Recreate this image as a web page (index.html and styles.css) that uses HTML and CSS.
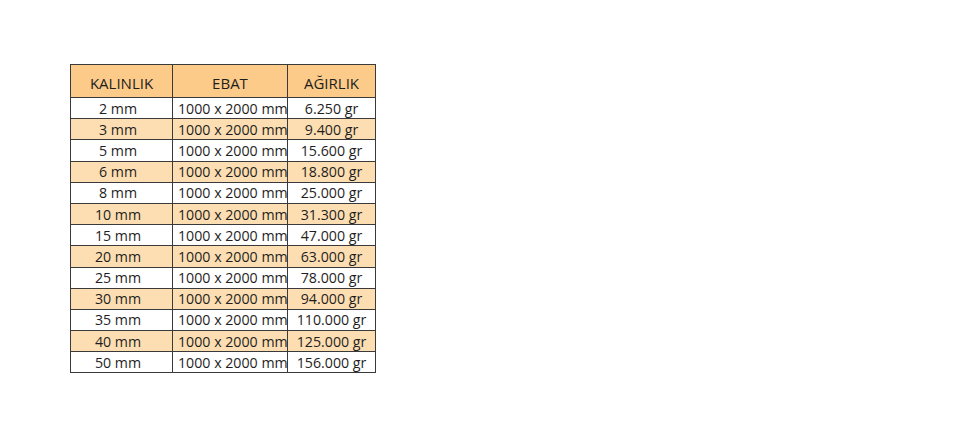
FILE: index.html
```html
<!DOCTYPE html>
<html lang="tr">
<head>
<meta charset="utf-8">
<title>Ağırlık Tablosu</title>
<link rel="stylesheet" href="styles.css">
</head>
<body>
<table class="spec">
  <colgroup>
    <col class="c1"><col class="c2"><col class="c3">
  </colgroup>
  <thead>
    <tr><th>KALINLIK</th><th>EBAT</th><th>AĞIRLIK</th></tr>
  </thead>
  <tbody>
    <tr><td class="thk">2 mm</td><td class="size">1000 x 2000 mm</td><td class="wt">6.250 gr</td></tr>
    <tr class="alt"><td class="thk">3 mm</td><td class="size">1000 x 2000 mm</td><td class="wt">9.400 gr</td></tr>
    <tr><td class="thk">5 mm</td><td class="size">1000 x 2000 mm</td><td class="wt">15.600 gr</td></tr>
    <tr class="alt"><td class="thk">6 mm</td><td class="size">1000 x 2000 mm</td><td class="wt">18.800 gr</td></tr>
    <tr><td class="thk">8 mm</td><td class="size">1000 x 2000 mm</td><td class="wt">25.000 gr</td></tr>
    <tr class="alt"><td class="thk">10 mm</td><td class="size">1000 x 2000 mm</td><td class="wt">31.300 gr</td></tr>
    <tr><td class="thk">15 mm</td><td class="size">1000 x 2000 mm</td><td class="wt">47.000 gr</td></tr>
    <tr class="alt"><td class="thk">20 mm</td><td class="size">1000 x 2000 mm</td><td class="wt">63.000 gr</td></tr>
    <tr><td class="thk">25 mm</td><td class="size">1000 x 2000 mm</td><td class="wt">78.000 gr</td></tr>
    <tr class="alt"><td class="thk">30 mm</td><td class="size">1000 x 2000 mm</td><td class="wt">94.000 gr</td></tr>
    <tr><td class="thk">35 mm</td><td class="size">1000 x 2000 mm</td><td class="wt">110.000 gr</td></tr>
    <tr class="alt"><td class="thk">40 mm</td><td class="size">1000 x 2000 mm</td><td class="wt">125.000 gr</td></tr>
    <tr><td class="thk">50 mm</td><td class="size">1000 x 2000 mm</td><td class="wt">156.000 gr</td></tr>
  </tbody>
</table>
</body>
</html>
```
FILE: styles.css
```css
html, body {
  margin: 0;
  padding: 0;
  background: #ffffff;
}

body {
  font-family: "Open Sans", "Noto Sans", sans-serif;
  color: #1e1e1e;
}

.spec {
  margin: 64px 0 0 70px;
  border-collapse: collapse;
  table-layout: fixed;
  width: 305px;
}

.c1 { width: 102px; }
.c2 { width: 115px; }
.c3 { width: 88px; }

.spec th,
.spec td {
  border: 1px solid #3a3a3a;
  padding: 0;
  white-space: nowrap;
  overflow: hidden;
}

.spec thead tr {
  height: 33px;
}

.spec th {
  background: #fccb89;
  font-weight: 400;
  font-size: 15px;
  text-align: center;
  padding-top: 4px;
  vertical-align: middle;
}

.spec tbody tr {
  height: 21.2px;
}

.spec td {
  font-size: 14.2px;
  line-height: 16px;
  vertical-align: middle;
  padding-top: 1px;
}

.spec tr.alt td {
  background: #fddeb2;
}

.spec .thk {
  text-align: center;
  padding-right: 7px;
}

.spec .size {
  text-align: left;
  padding-left: 5px;
}

.spec .wt {
  text-align: center;
}
```
